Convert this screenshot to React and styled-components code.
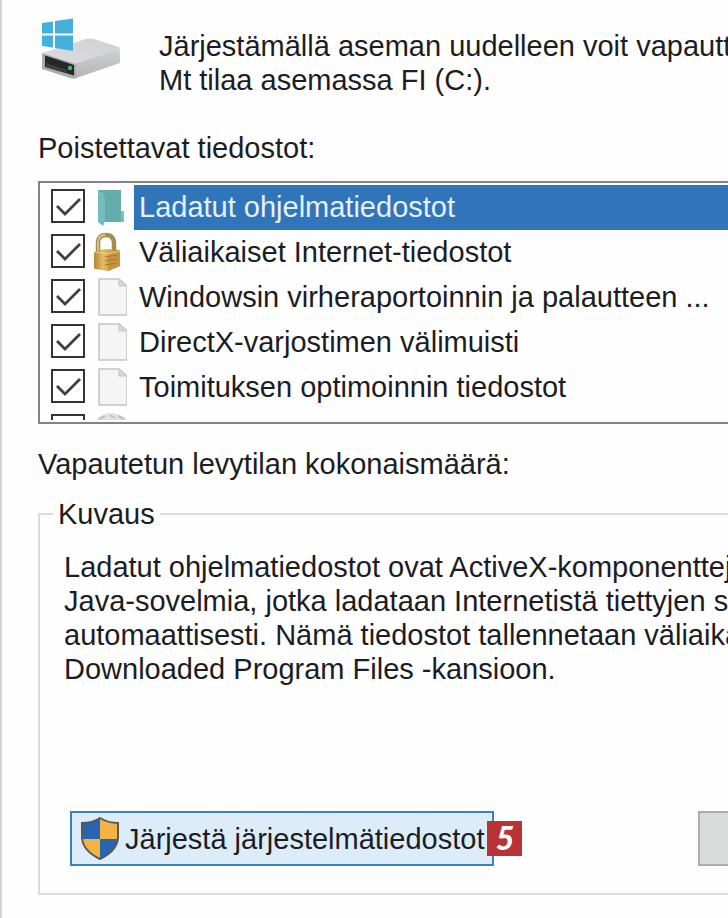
import React, { useState } from 'react';
import styled, { createGlobalStyle } from 'styled-components';

const GlobalStyle = createGlobalStyle`
  * {
    box-sizing: border-box;
  }

  body {
    margin: 0;
    overflow-x: hidden;
    background-color: #FEFEFE;
    color: #1C1C24;
    font-family: "Liberation Sans", Arial, sans-serif;
    font-size: 29px;
    line-height: 34px;
  }
`;

const Dialog = styled.main`
  min-height: 100vh;
  padding: 18px 0 22px 36px;
  overflow: hidden;
  border-left: 2px solid #D2D2D2;
  white-space: nowrap;
`;

const Header = styled.header`
  display: flex;
  align-items: flex-start;
  gap: 37px;
  padding-left: 4px;
`;

const Intro = styled.p`
  margin: 11px 0 0;
`;

const DriveSvg = styled.svg`
  flex: none;
  width: 80px;
  height: 64px;
`;

const Heading = styled.h2`
  margin: ${(props) => props.$top}px 0 16px;
  font-size: inherit;
  font-weight: normal;
`;

const ListBox = styled.div`
  padding: 2px 0;
  border: 2px solid #7F838B;
  border-right: 0;
`;

const FileList = styled.ul`
  height: 235px;
  margin: 0;
  padding: 0;
  overflow: hidden;
  list-style: none;
`;

const Row = styled.label`
  display: flex;
  align-items: center;
  height: 45px;
  padding-left: 11px;
`;

const CheckBox = styled.span`
  display: grid;
  flex: none;
  width: 34px;
  height: 34px;
  margin-bottom: 3px;

  > * {
    grid-area: 1 / 1;
  }
`;

const Tick = styled.input`
  width: 34px;
  height: 34px;
  margin: 0;
  appearance: none;
  border: 2px solid #333;
  background-color: #FFF;

  &:not(:checked) + svg {
    visibility: hidden;
  }
`;

const IconSlot = styled.span`
  display: flex;
  flex: none;
  width: 49px;
  height: 42px;
  padding-left: 6px;

  svg {
    width: 36px;
    height: 42px;
  }
`;

const FileName = styled.span`
  flex: 1;
  align-self: stretch;
  padding-left: 5px;
  line-height: 45px;

  ${(props) => props.$selected && `
    background-color: #3074B9;
    color: #E4F0FA;
  `}
`;

const Group = styled.fieldset`
  min-width: 0;
  margin: 0;
  padding: 19px 0 27px 24px;
  border: 2px solid #DCDCDC;
  border-right: 0;
`;

const Legend = styled.legend`
  margin-left: -11px;
  padding: 0 5px;
`;

const Description = styled.p`
  margin: 0;
`;

const Actions = styled.div`
  display: flex;
  justify-content: space-between;
  margin-top: 125px;
  padding-left: 6px;
`;

const CleanUp = styled.div`
  position: relative;
`;

const Button = styled.button`
  display: flex;
  align-items: center;
  gap: 5px;
  height: 55px;
  padding: 0 8px;
  border: 2px solid #3D80BC;
  background-color: #DCEDF9;
  color: inherit;
  font: inherit;
`;

const ViewButton = styled(Button)`
  width: 30px;
  border-color: #ADADAD;
  border-right: 0;
  background-color: #D9DBDA;
`;

const ShieldSvg = styled.svg`
  width: 40px;
  height: 43px;
`;

const Step = styled.span`
  position: absolute;
  top: 10px;
  right: -28px;
  width: 35px;
  height: 35px;
  background-color: #B93336;
  color: #FFF;
  font-family: Lato, "Open Sans", sans-serif;
  font-size: 32px;
  font-style: italic;
  font-weight: 900;
  text-align: center;
`;

const DriveIcon = () => (
  <DriveSvg viewBox="0 0 80 64" aria-hidden="true">
    <defs>
      <linearGradient id="top" x1="0" y1="1" x2="1" y2="0">
        <stop offset="0" stopColor="#DCDDDF" />
        <stop offset="1" stopColor="#D0D1D4" />
      </linearGradient>
      <linearGradient id="side" x1="0" y1="0" x2="0" y2="1">
        <stop offset="0" stopColor="#CFD0D3" />
        <stop offset="1" stopColor="#B2B4B8" />
      </linearGradient>
    </defs>
    <path d="M0 35L44 21Q48 20 52 21L77 29Q79 31 76 33L35 47Z" fill="url(#top)" />
    <path d="M33 46L75 32Q78 31 78 34V45L37 59Q33 61 31 60Z" fill="url(#side)" />
    <path d="M0 35L34 46V60Q31 61 28 60L0 51Z" fill="#A9ABAF" />
    <path d="M3 37.500L32 47V57.500L3 49Z" fill="#25272A" />
    <path d="M4 45L25 52V55L4 49Z" fill="#3D4043" />
    <circle cx="28" cy="50" r="2.200" fill="#39C353" />
    <path d="M0 5L11 3.500V15.500H0ZM13 3L31 0.500V15.500H13ZM0 17.500H11V29.500L0 28ZM13 17.500H31V33L13 30Z" fill="#43B1DC" />
  </DriveSvg>
);

const FolderIcon = () => (
  <svg viewBox="0 0 36 42" aria-hidden="true">
    <path d="M7 3H30V24H33V35H12L7 33Z" fill="#62ADAC" />
    <path d="M7 3L12 6Q14 8 14 12V34L12 39L7 35Z" fill="#76BBBE" />
    <path d="M30 24H33V35H30Z" fill="#7BC2BF" />
  </svg>
);

const LockIcon = () => (
  <svg viewBox="0 0 36 42" aria-hidden="true">
    <defs>
      <linearGradient id="brass" x1="0" y1="0" x2="1" y2="0">
        <stop offset="0" stopColor="#B98532" />
        <stop offset="0.350" stopColor="#E3BC68" />
        <stop offset="1" stopColor="#B17E30" />
      </linearGradient>
    </defs>
    <path d="M7 21V10Q8 3 15 3Q22 3 23 10V21" fill="none" stroke="#A98A50" strokeWidth="4.500" />
    <path d="M7 21V10Q8 3 14 3" fill="none" stroke="#D9C28D" strokeWidth="2" />
    <path d="M3 20L13 17L28 18Q29 18 29 20V34L17 39L4 37Q3 37 3 35Z" fill="url(#brass)" />
    <path d="M17 22L29 19V34L17 39Z" fill="#C4933F" />
    <path d="M14 25L26 23M14 29L26 27M14 33L26 31" stroke="#A87730" strokeWidth="1.200" />
    <path d="M3 20L17 22L29 19" fill="none" stroke="#EBD08B" />
  </svg>
);

const PageIcon = () => (
  <svg viewBox="0 0 36 42" aria-hidden="true">
    <path d="M8 2H28L36 9V38H8Z" fill="#F5F5F5" stroke="#C4C4C4" strokeWidth="1.500" />
    <path d="M28 2V9H36Z" fill="#D5D8D9" stroke="#C4C4C4" />
  </svg>
);

const BinIcon = () => (
  <svg viewBox="0 0 36 42" aria-hidden="true">
    <path d="M5 8L10 4L16 1L22 1L29 3L36 7L31 38H9Z" fill="#E0E4E6" />
    <path d="M8 7L14 4M19 3L24 6M27 4L33 7" fill="none" stroke="#BAC2C6" strokeWidth="2" />
  </svg>
);

const ShieldIcon = () => (
  <ShieldSvg viewBox="0 0 40 43" aria-hidden="true">
    <clipPath id="shield">
      <path d="M20 1Q28 6 38 6V21Q37 34 20 42Q3 34 2 21V6Q12 6 20 1Z" />
    </clipPath>
    <g clipPath="url(#shield)">
      <path d="M0 0H20V22H0ZM20 22H40V43H20Z" fill="#2865B0" />
      <path d="M20 0H40V22H20ZM0 22H20V43H0Z" fill="#F5B343" />
    </g>
    <path d="M20 1Q28 6 38 6V21Q37 34 20 42Q3 34 2 21V6Q12 6 20 1Z" fill="none" stroke="#56595A" strokeWidth="2" />
  </ShieldSvg>
);

const FILES = [
  { name: 'Ladatut ohjelmatiedostot', Icon: FolderIcon },
  { name: 'Väliaikaiset Internet-tiedostot', Icon: LockIcon },
  { name: 'Windowsin virheraportoinnin ja palautteen ...', Icon: PageIcon },
  { name: 'DirectX-varjostimen välimuisti', Icon: PageIcon },
  { name: 'Toimituksen optimoinnin tiedostot', Icon: PageIcon },
  { name: '', Icon: BinIcon },
];

const FileRow = ({ name, Icon, selected }) => {
  const [checked, setChecked] = useState(name !== '');

  return (
    <li>
      <Row>
        <CheckBox>
          <Tick
            type="checkbox"
            checked={checked}
            onChange={() => setChecked(!checked)}
          />
          <svg viewBox="0 0 34 34" aria-hidden="true">
            <path d="M6 17L14 25L29 10" fill="none" stroke="#404040" strokeWidth="2.800" />
          </svg>
        </CheckBox>
        <IconSlot><Icon /></IconSlot>
        <FileName $selected={selected}>{name}</FileName>
      </Row>
    </li>
  );
};

const App = () => (
  <Dialog>
    <GlobalStyle />
    <Header>
      <DriveIcon />
      <Intro>
        Järjestämällä aseman uudelleen voit vapautt
        <br />
        Mt tilaa asemassa FI (C:).
      </Intro>
    </Header>

    <Heading $top={34}>Poistettavat tiedostot:</Heading>
    <ListBox>
      <FileList>
        {FILES.map((file, index) => (
          <FileRow
            key={file.name}
            name={file.name}
            Icon={file.Icon}
            selected={index === 0}
          />
        ))}
      </FileList>
    </ListBox>

    <Heading $top={23}>Vapautetun levytilan kokonaismäärä:</Heading>
    <Group>
      <Legend>Kuvaus</Legend>
      <Description>
        Ladatut ohjelmatiedostot ovat ActiveX-komponentteja
        <br />
        Java-sovelmia, jotka ladataan Internetistä tiettyjen siv
        <br />
        automaattisesti. Nämä tiedostot tallennetaan väliaika
        <br />
        Downloaded Program Files -kansioon.
      </Description>
      <Actions>
        <CleanUp>
          <Button type="button">
            <ShieldIcon />
            Järjestä järjestelmätiedostot
          </Button>
          <Step>5</Step>
        </CleanUp>
        <ViewButton type="button" aria-label="Näytä tiedostot" />
      </Actions>
    </Group>
  </Dialog>
);

export default App;
